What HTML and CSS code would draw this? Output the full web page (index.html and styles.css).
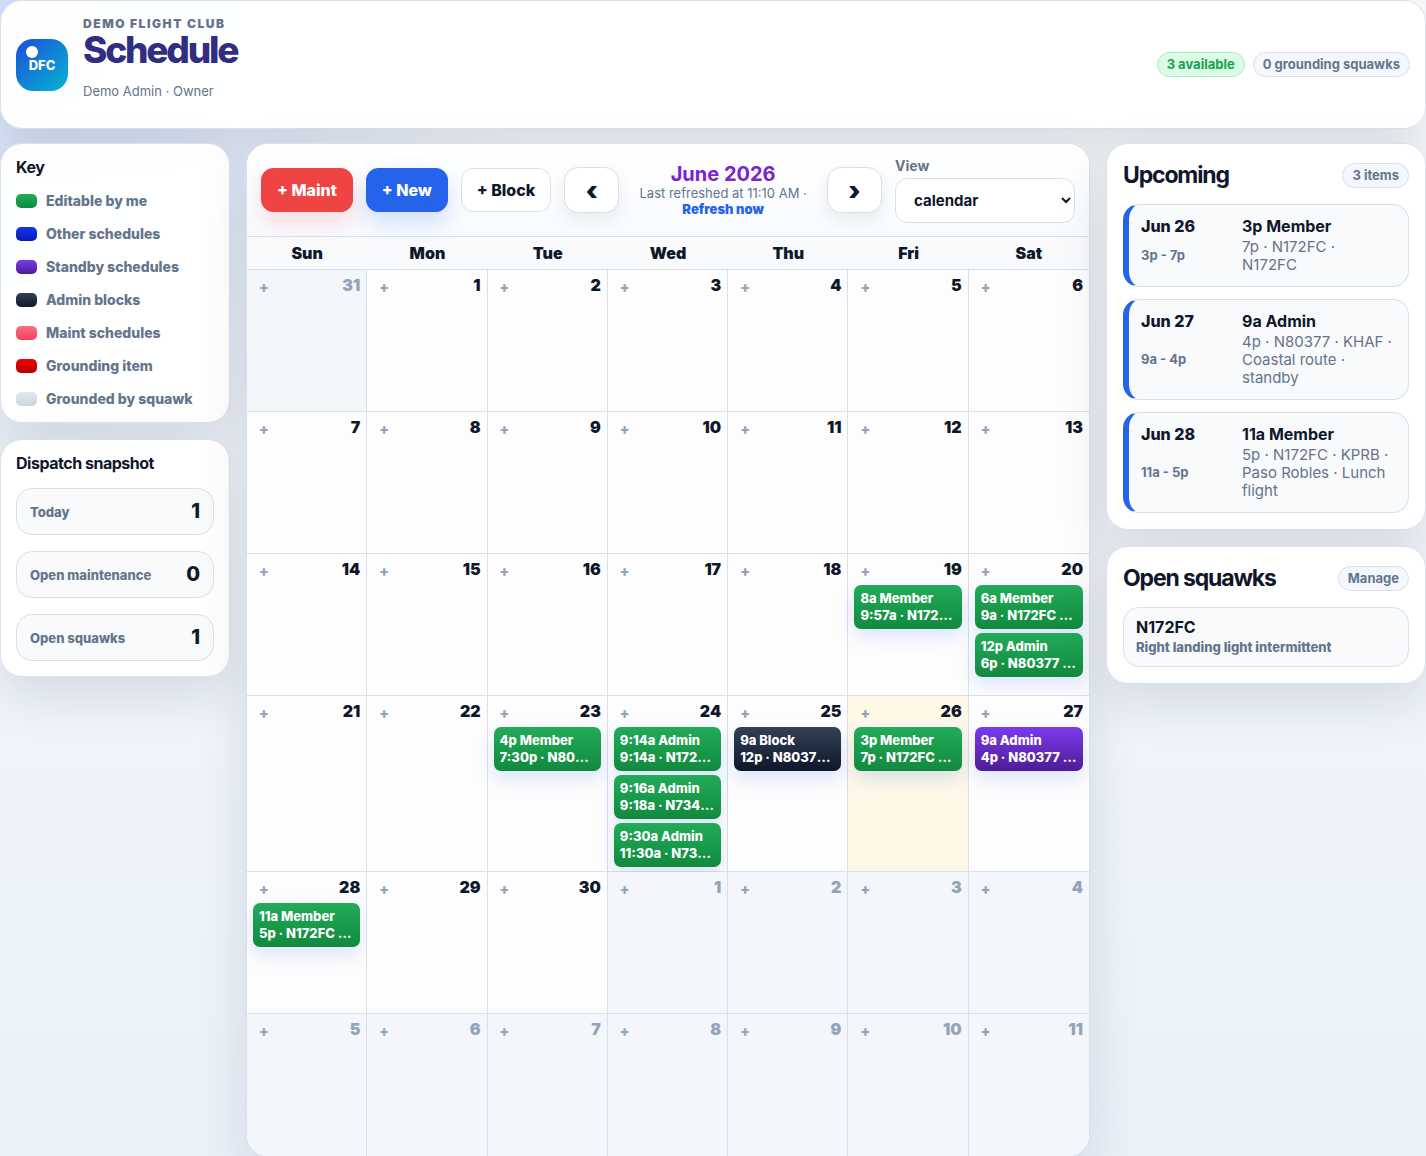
FILE: index.html
```html
<!DOCTYPE html>
<html lang="en">
<head>
  <meta charset="UTF-8">
  <meta name="viewport" content="width=device-width, initial-scale=1.0">
  <title>Schedule</title>
  <link rel="stylesheet" href="styles.css">
</head>
<body>
  <header class="topbar card">
    <div class="logo"><span class="logo-dot"></span>DFC</div>
    <div class="heading">
      <p class="club">Demo Flight Club</p>
      <h1>Schedule</h1>
      <p class="user">Demo Admin · Owner</p>
    </div>
    <div class="status">
      <span class="pill good">3 available</span>
      <span class="pill">0 grounding squawks</span>
    </div>
  </header>

  <div class="layout">
    <aside class="side">
      <section class="card key">
        <h2>Key</h2>
        <ul>
          <li><span class="swatch green"></span>Editable by me</li>
          <li><span class="swatch blue"></span>Other schedules</li>
          <li><span class="swatch purple"></span>Standby schedules</li>
          <li><span class="swatch dark"></span>Admin blocks</li>
          <li><span class="swatch pink"></span>Maint schedules</li>
          <li><span class="swatch red"></span>Grounding item</li>
          <li><span class="swatch gray"></span>Grounded by squawk</li>
        </ul>
      </section>
      <section class="card snapshot">
        <h2>Dispatch snapshot</h2>
        <div class="stat"><span>Today</span><strong>1</strong></div>
        <div class="stat"><span>Open maintenance</span><strong>0</strong></div>
        <div class="stat"><span>Open squawks</span><strong>1</strong></div>
      </section>
    </aside>

    <main class="card calendar">
      <div class="toolbar">
        <button class="btn maint">+ Maint</button>
        <button class="btn new">+ New</button>
        <button class="btn">+ Block</button>
        <button class="btn arrow">‹</button>
        <div class="month">
          <h2>June 2026</h2>
          <p>Last refreshed at 11:10 AM · <a href="#">Refresh now</a></p>
        </div>
        <button class="btn arrow">›</button>
        <div class="view">
          <label for="view">View</label>
          <select id="view">
            <option>calendar</option>
          </select>
        </div>
      </div>

      <table class="days">
        <thead>
          <tr><th>Sun</th><th>Mon</th><th>Tue</th><th>Wed</th><th>Thu</th><th>Fri</th><th>Sat</th></tr>
        </thead>
        <tbody>
          <tr>
            <td class="out"><div class="day"><button class="add">+</button><span>31</span></div></td>
            <td><div class="day"><button class="add">+</button><span>1</span></div></td>
            <td><div class="day"><button class="add">+</button><span>2</span></div></td>
            <td><div class="day"><button class="add">+</button><span>3</span></div></td>
            <td><div class="day"><button class="add">+</button><span>4</span></div></td>
            <td><div class="day"><button class="add">+</button><span>5</span></div></td>
            <td><div class="day"><button class="add">+</button><span>6</span></div></td>
          </tr>
          <tr>
            <td><div class="day"><button class="add">+</button><span>7</span></div></td>
            <td><div class="day"><button class="add">+</button><span>8</span></div></td>
            <td><div class="day"><button class="add">+</button><span>9</span></div></td>
            <td><div class="day"><button class="add">+</button><span>10</span></div></td>
            <td><div class="day"><button class="add">+</button><span>11</span></div></td>
            <td><div class="day"><button class="add">+</button><span>12</span></div></td>
            <td><div class="day"><button class="add">+</button><span>13</span></div></td>
          </tr>
          <tr>
            <td><div class="day"><button class="add">+</button><span>14</span></div></td>
            <td><div class="day"><button class="add">+</button><span>15</span></div></td>
            <td><div class="day"><button class="add">+</button><span>16</span></div></td>
            <td><div class="day"><button class="add">+</button><span>17</span></div></td>
            <td><div class="day"><button class="add">+</button><span>18</span></div></td>
            <td>
              <div class="day"><button class="add">+</button><span>19</span></div>
              <button class="event green"><span>8a Member</span><span>9:57a · N172FC</span></button>
            </td>
            <td>
              <div class="day"><button class="add">+</button><span>20</span></div>
              <button class="event green"><span>6a Member</span><span>9a · N172FC · N172FC</span></button>
              <button class="event green"><span>12p Admin</span><span>6p · N80377 · N80377</span></button>
            </td>
          </tr>
          <tr>
            <td><div class="day"><button class="add">+</button><span>21</span></div></td>
            <td><div class="day"><button class="add">+</button><span>22</span></div></td>
            <td>
              <div class="day"><button class="add">+</button><span>23</span></div>
              <button class="event green"><span>4p Member</span><span>7:30p · N80377</span></button>
            </td>
            <td>
              <div class="day"><button class="add">+</button><span>24</span></div>
              <button class="event green"><span>9:14a Admin</span><span>9:14a · N172FC · N172FC</span></button>
              <button class="event green"><span>9:16a Admin</span><span>9:18a · N734AB</span></button>
              <button class="event green"><span>9:30a Admin</span><span>11:30a · N734AB</span></button>
            </td>
            <td>
              <div class="day"><button class="add">+</button><span>25</span></div>
              <button class="event dark"><span>9a Block</span><span>12p · N80377 · N80377</span></button>
            </td>
            <td class="today">
              <div class="day"><button class="add">+</button><span>26</span></div>
              <button class="event green"><span>3p Member</span><span>7p · N172FC · N172FC</span></button>
            </td>
            <td>
              <div class="day"><button class="add">+</button><span>27</span></div>
              <button class="event purple"><span>9a Admin</span><span>4p · N80377 · KHAF</span></button>
            </td>
          </tr>
          <tr>
            <td>
              <div class="day"><button class="add">+</button><span>28</span></div>
              <button class="event green"><span>11a Member</span><span>5p · N172FC · KPRB</span></button>
            </td>
            <td><div class="day"><button class="add">+</button><span>29</span></div></td>
            <td><div class="day"><button class="add">+</button><span>30</span></div></td>
            <td class="out"><div class="day"><button class="add">+</button><span>1</span></div></td>
            <td class="out"><div class="day"><button class="add">+</button><span>2</span></div></td>
            <td class="out"><div class="day"><button class="add">+</button><span>3</span></div></td>
            <td class="out"><div class="day"><button class="add">+</button><span>4</span></div></td>
          </tr>
          <tr>
            <td class="out"><div class="day"><button class="add">+</button><span>5</span></div></td>
            <td class="out"><div class="day"><button class="add">+</button><span>6</span></div></td>
            <td class="out"><div class="day"><button class="add">+</button><span>7</span></div></td>
            <td class="out"><div class="day"><button class="add">+</button><span>8</span></div></td>
            <td class="out"><div class="day"><button class="add">+</button><span>9</span></div></td>
            <td class="out"><div class="day"><button class="add">+</button><span>10</span></div></td>
            <td class="out"><div class="day"><button class="add">+</button><span>11</span></div></td>
          </tr>
        </tbody>
      </table>
    </main>

    <aside class="side">
      <section class="card panel">
        <div class="panel-head">
          <h2>Upcoming</h2>
          <span class="pill">3 items</span>
        </div>
        <div class="trip">
          <div class="when"><strong>Jun 26</strong><span>3p - 7p</span></div>
          <div class="what"><strong>3p Member</strong><p>7p · N172FC · N172FC</p></div>
        </div>
        <div class="trip">
          <div class="when"><strong>Jun 27</strong><span>9a - 4p</span></div>
          <div class="what"><strong>9a Admin</strong><p>4p · N80377 · KHAF · Coastal route · standby</p></div>
        </div>
        <div class="trip">
          <div class="when"><strong>Jun 28</strong><span>11a - 5p</span></div>
          <div class="what"><strong>11a Member</strong><p>5p · N172FC · KPRB · Paso Robles · Lunch flight</p></div>
        </div>
      </section>
      <section class="card panel">
        <div class="panel-head">
          <h2>Open squawks</h2>
          <a class="pill" href="#">Manage</a>
        </div>
        <div class="squawk">
          <strong>N172FC</strong>
          <p>Right landing light intermittent</p>
        </div>
      </section>
    </aside>
  </div>
</body>
</html>
```

FILE: styles.css
```css
* {
  box-sizing: border-box;
}

body {
  margin: 0;
  font-family: Inter, "Liberation Sans", sans-serif;
  font-size: 16px;
  line-height: 18px;
  color: #0f172a;
  background: radial-gradient(circle at top left, rgba(37, 99, 235, 0.18), transparent 544px),
    linear-gradient(180deg, #f8fafc, #eaf1f9);
  min-height: 100vh;
}

h1, h2, p, ul {
  margin: 0;
  padding: 0;
}

button, select {
  font-family: inherit;
  color: inherit;
}

.card {
  background-color: rgba(255, 255, 255, 0.97);
  border: 1px solid #d8e0ec;
  border-radius: 22px;
  box-shadow: 0 18px 50px rgba(15, 23, 42, 0.12);
}

/* header */
.topbar {
  display: flex;
  align-items: center;
  gap: 15px;
  padding: 15px;
}

.logo {
  position: relative;
  display: flex;
  align-items: center;
  justify-content: center;
  width: 52px;
  height: 52px;
  border-radius: 17px;
  background: linear-gradient(135deg, #1d4ed8, #06b6d4);
  color: #fff;
  font-size: 13px;
  font-weight: 800;
}

.logo-dot {
  position: absolute;
  top: 7px;
  left: 10px;
  width: 12px;
  height: 12px;
  border-radius: 50%;
  background-color: #fff;
}

.heading {
  flex: 1;
}

.club {
  font-size: 12px;
  line-height: 15px;
  font-weight: 900;
  letter-spacing: 0.13em;
  text-transform: uppercase;
  color: #64748b;
}

h1 {
  font-size: 37px;
  line-height: 38px;
  font-weight: 800;
  letter-spacing: -0.06em;
  color: #312e81;
}

.user {
  margin: 13px 0;
  font-size: 13px;
  color: #64748b;
}

.status {
  display: flex;
  gap: 8px;
}

.pill {
  padding: 3px 9px;
  border: 1px solid #d8e0ec;
  border-radius: 999px;
  background-color: #f4f7fd;
  color: #64748b;
  font-size: 13px;
  line-height: 17px;
  font-weight: 700;
  text-decoration: none;
}

.pill.good {
  border-color: #a7ecbf;
  background-color: #dcfce7;
  color: #16a34a;
}

.layout {
  display: grid;
  grid-template-columns: 230px minmax(0, 1fr) 320px;
  gap: 16px;
  align-items: start;
  margin-top: 14px;
}

.side {
  display: grid;
  gap: 16px;
}

/* left column */
.key, .snapshot {
  padding: 14px 15px;
}

.key h2, .snapshot h2 {
  font-size: 16px;
  font-weight: 700;
  line-height: 18px;
  letter-spacing: -0.03em;
}

.key ul {
  list-style: none;
  padding-top: 1px;
}

.key li {
  display: flex;
  align-items: center;
  gap: 9px;
  margin-top: 15px;
  font-size: 14px;
  font-weight: 800;
  color: #64748b;
}

.swatch {
  width: 21px;
  height: 14px;
  border-radius: 5px;
}

.green { background: linear-gradient(180deg, #22ab59, #118a3e); }
.blue { background: linear-gradient(180deg, #1236ef, #0719b8); }
.purple { background: linear-gradient(180deg, #7c3aed, #4c1d95); }
.dark { background: linear-gradient(180deg, #334155, #0f172a); }
.pink { background: linear-gradient(180deg, #fb7185, #f43f5e); }
.red { background: linear-gradient(180deg, #ef0000, #b40000); }
.gray { background: linear-gradient(180deg, #e2e8f0, #cbd5e1); }

.snapshot {
  display: grid;
  gap: 16px;
  padding-bottom: 15px;
}

.stat {
  display: flex;
  align-items: center;
  justify-content: space-between;
  padding: 11px 13px;
  border: 1px solid #d8e0ec;
  border-radius: 16px;
  background-color: #f8fafc;
  font-size: 13px;
  font-weight: 800;
  color: #64748b;
}

.stat strong {
  font-size: 20px;
  line-height: 23px;
  font-weight: 800;
  color: #0f172a;
}

/* calendar */
.calendar {
  overflow: hidden;
}

.toolbar {
  display: flex;
  align-items: center;
  gap: 13px;
  padding: 13px 14px;
  border-bottom: 1px solid #d8e0ec;
  background: linear-gradient(180deg, #fff, #f8fbff);
}

.btn {
  height: 44px;
  padding: 0 15px;
  border: 1px solid #d8e0ec;
  border-radius: 12px;
  background-color: #fff;
  font-size: 16px;
  font-weight: 800;
  white-space: nowrap;
  cursor: pointer;
}

.btn.maint {
  border-color: #ef4444;
  background-color: #ef4444;
  color: #fff;
  box-shadow: 0 10px 22px rgba(239, 68, 68, 0.18);
}

.btn.new {
  border-color: #2563eb;
  background-color: #2563eb;
  color: #fff;
  box-shadow: 0 10px 22px rgba(37, 99, 235, 0.2);
}

.btn.arrow {
  width: 55px;
  height: 46px;
  border-radius: 14px;
  font-size: 26px;
  font-weight: 900;
  box-shadow: 0 6px 16px rgba(15, 23, 42, 0.08);
}

.month {
  flex: 1;
  text-align: center;
}

.month h2 {
  font-size: 20px;
  line-height: 22px;
  font-weight: 700;
  color: #7e22ce;
}

.month p {
  font-size: 13px;
  line-height: 16px;
  color: #64748b;
}

.month a {
  color: #2563eb;
  font-weight: 900;
  text-decoration: none;
}

.view {
  width: 180px;
}

.view label {
  display: block;
  margin-bottom: 3px;
  font-size: 14px;
  font-weight: 700;
  color: #64748b;
}

.view select {
  width: 100%;
  height: 45px;
  padding: 0 14px;
  border: 1px solid #d8e0ec;
  border-radius: 12px;
  background-color: #fff;
  font-size: 15px;
  font-weight: 700;
}

.days {
  width: 100%;
  table-layout: fixed;
  border-collapse: separate;
  border-spacing: 0;
}

.days th {
  height: 33px;
  padding: 0;
  border-bottom: 1px solid #d8e0ec;
  background-color: #f8fafc;
  font-size: 16px;
  font-weight: 900;
}

.days td {
  height: 142px;
  padding: 6px;
  padding-bottom: 4px;
  border-right: 1px solid #d8e0ec;
  border-bottom: 1px solid #d8e0ec;
  background-color: #fdfdfd;
  vertical-align: top;
}

.days td:last-child {
  border-right: none;
}

.days tr:last-child td {
  border-bottom: none;
}

.days td.out {
  background-color: #f3f6fb;
}

.days td.today {
  background-color: #fef8e7;
}

.day {
  display: flex;
  justify-content: space-between;
  height: 25px;
  font-weight: 900;
}

.out .day {
  color: #94a3b8;
}

.add {
  height: 20px;
  padding: 0 6px;
  border: none;
  background: none;
  color: #94a3b8;
  font-size: 14px;
  font-weight: 900;
  cursor: pointer;
}

.event {
  display: block;
  width: 100%;
  padding: 5px 6px;
  border: none;
  border-radius: 7px;
  color: #fff;
  font-size: 13px;
  line-height: 17px;
  font-weight: 800;
  text-align: left;
  box-shadow: 0 8px 18px rgba(37, 99, 235, 0.16);
  cursor: pointer;
}

.event + .event {
  margin-top: 4px;
}

.event span {
  display: block;
  overflow: hidden;
  white-space: nowrap;
  text-overflow: ellipsis;
}

/* right column */
.panel {
  display: grid;
  gap: 12px;
  padding: 14px 16px 16px;
}

.panel-head {
  display: flex;
  align-items: center;
  justify-content: space-between;
  height: 34px;
}

.panel h2 {
  font-size: 23px;
  font-weight: 700;
  letter-spacing: -0.05em;
}

.trip {
  display: grid;
  grid-template-columns: 88px 1fr;
  gap: 13px;
  padding: 12px 15px 12px 12px;
  border: 1px solid #d8e0ec;
  border-left: 6px solid #2563eb;
  border-radius: 16px;
  background-color: #f8fafc;
}

.when {
  display: grid;
}

.when span {
  font-size: 13px;
  font-weight: 700;
  color: #64748b;
}

.when strong {
  font-weight: 800;
}

.what p {
  margin-top: 3px;
  font-size: 15px;
  color: #64748b;
}

.squawk {
  padding: 10px 12px;
  border: 1px solid #d8e0ec;
  border-radius: 16px;
  background-color: #f8fafc;
}

.squawk p {
  margin-top: 2px;
  font-size: 13px;
  font-weight: 800;
  color: #64748b;
}
```
